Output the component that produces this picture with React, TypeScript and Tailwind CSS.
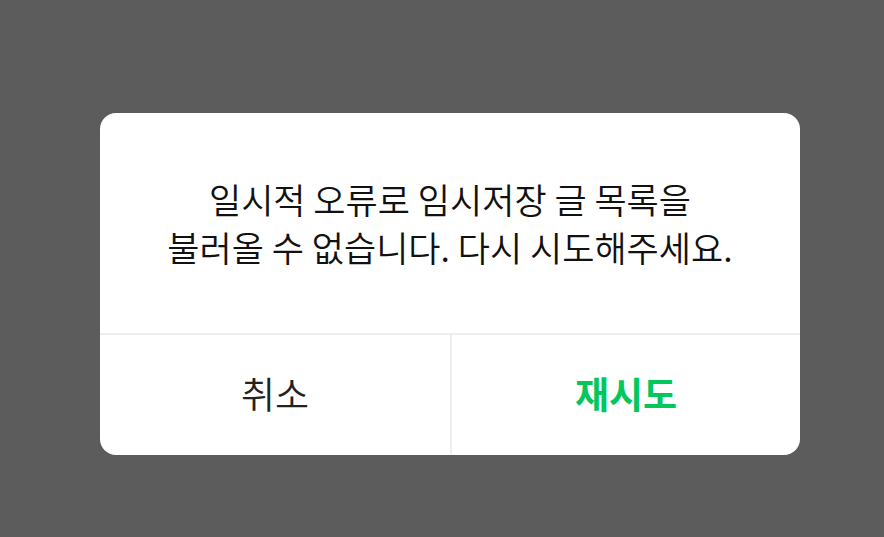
import React from "react";

export default function App() {
  return (
    <div
      className="w-[884px] h-[537px] bg-[#5c5c5c] pt-[113px] pl-[100px] overflow-hidden"
      style={{ fontFamily: '"Noto Sans CJK KR", "Noto Sans", sans-serif' }}
    >
      <div className="w-[700px] h-[342px] bg-white rounded-[16px] flex flex-col overflow-hidden">
        <div className="h-[220px] flex items-center justify-center">
          <p className="text-center text-[35px] leading-[48px] font-[350] text-[#111111]">
            일시적 오류로 임시저장 글 목록을
            <br />
            불러올 수 없습니다. 다시 시도해주세요.
          </p>
        </div>
        <div className="flex-1 flex border-t-2 border-[#eeeeee]">
          <button className="w-[350px] flex items-center justify-center text-[37px] font-[350] text-[#222222] pb-[2px]">
            취소
          </button>
          <div className="w-[2px] bg-[#eeeeee]" />
          <button className="flex-1 flex items-center justify-center text-[37px] font-bold text-[#03c75a] pb-[2px]">
            재시도
          </button>
        </div>
      </div>
    </div>
  );
}
